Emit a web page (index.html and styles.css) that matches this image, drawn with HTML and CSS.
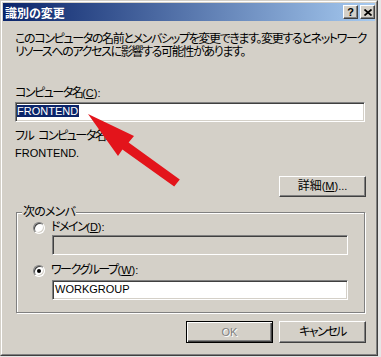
FILE: index.html
```html
<!DOCTYPE html>
<html lang="ja">
<head>
<meta charset="utf-8">
<title>識別の変更</title>
<link rel="stylesheet" href="styles.css">
</head>
<body>
<div class="window">
  <div class="frame">
    <div class="titlebar">
      <span class="title">識別の変更</span>
      <span class="tbtn help">?</span>
      <span class="tbtn close"><svg width="8" height="7" viewBox="0 0 8 7"><path d="M0.5 0.5 L7.5 6.5 M7.5 0.5 L0.5 6.5" stroke="#000" stroke-width="1.7" fill="none"/></svg></span>
    </div>
    <div class="content">
      <p class="desc">このコンピュータの名前とメンバシップを変更できます。変更するとネットワーク<br>リソースへのアクセスに影響する可能性があります。</p>
      <div class="label l-name">コンピュータ名<span class="lat">(<u>C</u>):</span></div>
      <div class="field main"><span class="sel">FRONTEND</span></div>
      <div class="label l-full">フル コンピュータ名<span class="lat">:</span></div>
      <div class="value">FRONTEND.</div>
      <div class="row-right r-more"><span class="btn kanji">詳細<span class="lat">(<u>M</u>)...</span></span></div>
      <fieldset class="group">
        <legend>次のメンバ</legend>
        <div class="opt o1"><span class="radio"></span><span>ドメイン<span class="lat">(<u>D</u>):</span></span></div>
        <div class="field sub disabled"></div>
        <div class="opt o2"><span class="radio checked"></span><span>ワークグループ<span class="lat">(<u>W</u>):</span></span></div>
        <div class="field sub"><span class="val">WORKGROUP</span></div>
      </fieldset>
      <div class="row-right r-actions">
        <span class="btn default disabled">OK</span>
        <span class="btn">キャンセル</span>
      </div>
    </div>
  </div>
</div>
<svg class="arrow" viewBox="0 0 381 357" width="381" height="357">
  <polygon points="88,114 134,136 128.6,142.4 179.8,179.6 174.2,186.4 122.4,149.6 118,156" fill="#e3141b"/>
</svg>
</body>
</html>
```
FILE: styles.css
```css
* { box-sizing: border-box; }
html, body { margin: 0; padding: 0; }
body {
  background: #e6e6e6;
  width: 381px;
  height: 357px;
  position: relative;
  overflow: hidden;
  font-family: "Liberation Sans", "Noto Sans CJK JP", sans-serif;
  font-size: 12px;
  line-height: 13px;
  color: #000;
  font-feature-settings: "palt";
  letter-spacing: -1.5px;
}
.lat {
  letter-spacing: 0;
  font-size: 11px;
}
.window {
  width: 378px;
  height: 356px;
  border: 1px solid;
  border-color: #d4d0c8 #404040 #404040 #d4d0c8;
  background: #d4d0c8;
}
.frame {
  height: 100%;
  border: 1px solid;
  border-color: #fff #808080 #808080 #fff;
  padding: 1px;
}
.titlebar {
  height: 18px;
  background: linear-gradient(to right, #0a246a, #a6caf0);
  display: flex;
  align-items: center;
  padding-left: 2px;
  letter-spacing: 0;
}
.title {
  flex: 1;
  color: #fff;
  font-weight: bold;
  font-family: "Noto Sans CJK JP", sans-serif;
}
.tbtn {
  width: 15px;
  height: 14px;
  background: #d4d0c8;
  border: 1px solid;
  border-color: #fff #404040 #404040 #fff;
  box-shadow: inset -1px -1px #808080;
  display: flex;
  align-items: center;
  justify-content: center;
  font-family: "Liberation Sans", sans-serif;
  font-weight: bold;
  font-size: 11px;
  line-height: 12px;
}
.tbtn + .tbtn { margin-left: 2px; }
.content { padding: 0 9px 0 12px; }
.desc {
  margin: 12px 0 0;
  letter-spacing: -1.35px;
  white-space: nowrap;
}
.l-name { margin-top: 28px; }
.field {
  height: 20px;
  width: 350px;
  background: #fff;
  border: 1px solid;
  border-color: #808080 #fff #fff #808080;
  box-shadow: inset 1px 1px #404040, inset -1px -1px #d4d0c8;
  padding: 2px 0 0 1px;
  font-family: "Liberation Sans", sans-serif;
  font-size: 11px;
  line-height: 12px;
  letter-spacing: 0;
}
.field.main { margin-top: 2px; }
.sel {
  display: inline-block;
  background: #0a246a;
  color: #fff;
  padding: 0 1px 0 0;
}
.l-full {
  margin-top: 8px;
  word-spacing: 3px;
}
.value {
  margin-top: 4px;
  font-family: "Liberation Sans", sans-serif;
  font-size: 11px;
  letter-spacing: 0;
}
.row-right {
  display: flex;
  justify-content: flex-end;
  gap: 6px;
}
.r-more { margin-top: 16px; }
.btn {
  width: 87px;
  height: 21px;
  display: flex;
  align-items: center;
  justify-content: center;
  background: #d4d0c8;
  border: 1px solid;
  border-color: #fff #404040 #404040 #fff;
  box-shadow: inset -1px -1px #808080;
}
.btn.kanji { letter-spacing: 0; }
.r-actions { margin-top: 8px; }
.r-actions .btn { height: 22px; }
.btn.default {
  border-color: #000;
  box-shadow: inset 1px 1px #fff, inset -1px -1px #404040, inset -2px -2px #808080;
}
.btn.disabled {
  color: #808080;
  text-shadow: 1px 1px #fff;
  font-family: "Liberation Sans", sans-serif;
  font-size: 11px;
  letter-spacing: 0;
}
.group {
  margin: 9px 0 0 1px;
  width: 349px;
  min-width: 0;
  padding: 0 0 12px 0;
  border: 1px solid #808080;
  box-shadow: 1px 1px 0 #fff, inset 1px 1px 0 #fff;
}
.group legend {
  margin-left: 5px;
  padding: 0 1px;
  line-height: 13px;
  background: #d4d0c8;
  letter-spacing: -0.8px;
}
.opt {
  display: flex;
  align-items: center;
  gap: 6px;
  padding-left: 16px;
  height: 13px;
}
.o1 { margin-top: 2px; }
.o2 { margin-top: 9px; }
.radio {
  width: 12px;
  height: 12px;
  border-radius: 50%;
  border: 1px solid;
  border-color: #808080 #fff #fff #808080;
  background: #fff;
  box-shadow: inset 1px 1px #404040, inset -1px -1px #d4d0c8;
  display: flex;
  align-items: center;
  justify-content: center;
}
.radio.checked::after {
  content: "";
  width: 4px;
  height: 4px;
  border-radius: 50%;
  background: #000;
}
.field.sub {
  width: 296px;
  margin-left: 35px;
  padding-left: 2px;
}
.o1 + .field.sub { margin-top: 1px; }
.o2 + .field.sub { margin-top: 3px; }
.field.disabled { background: #d4d0c8; }
.arrow {
  position: absolute;
  left: 0;
  top: 0;
  pointer-events: none;
}
```
